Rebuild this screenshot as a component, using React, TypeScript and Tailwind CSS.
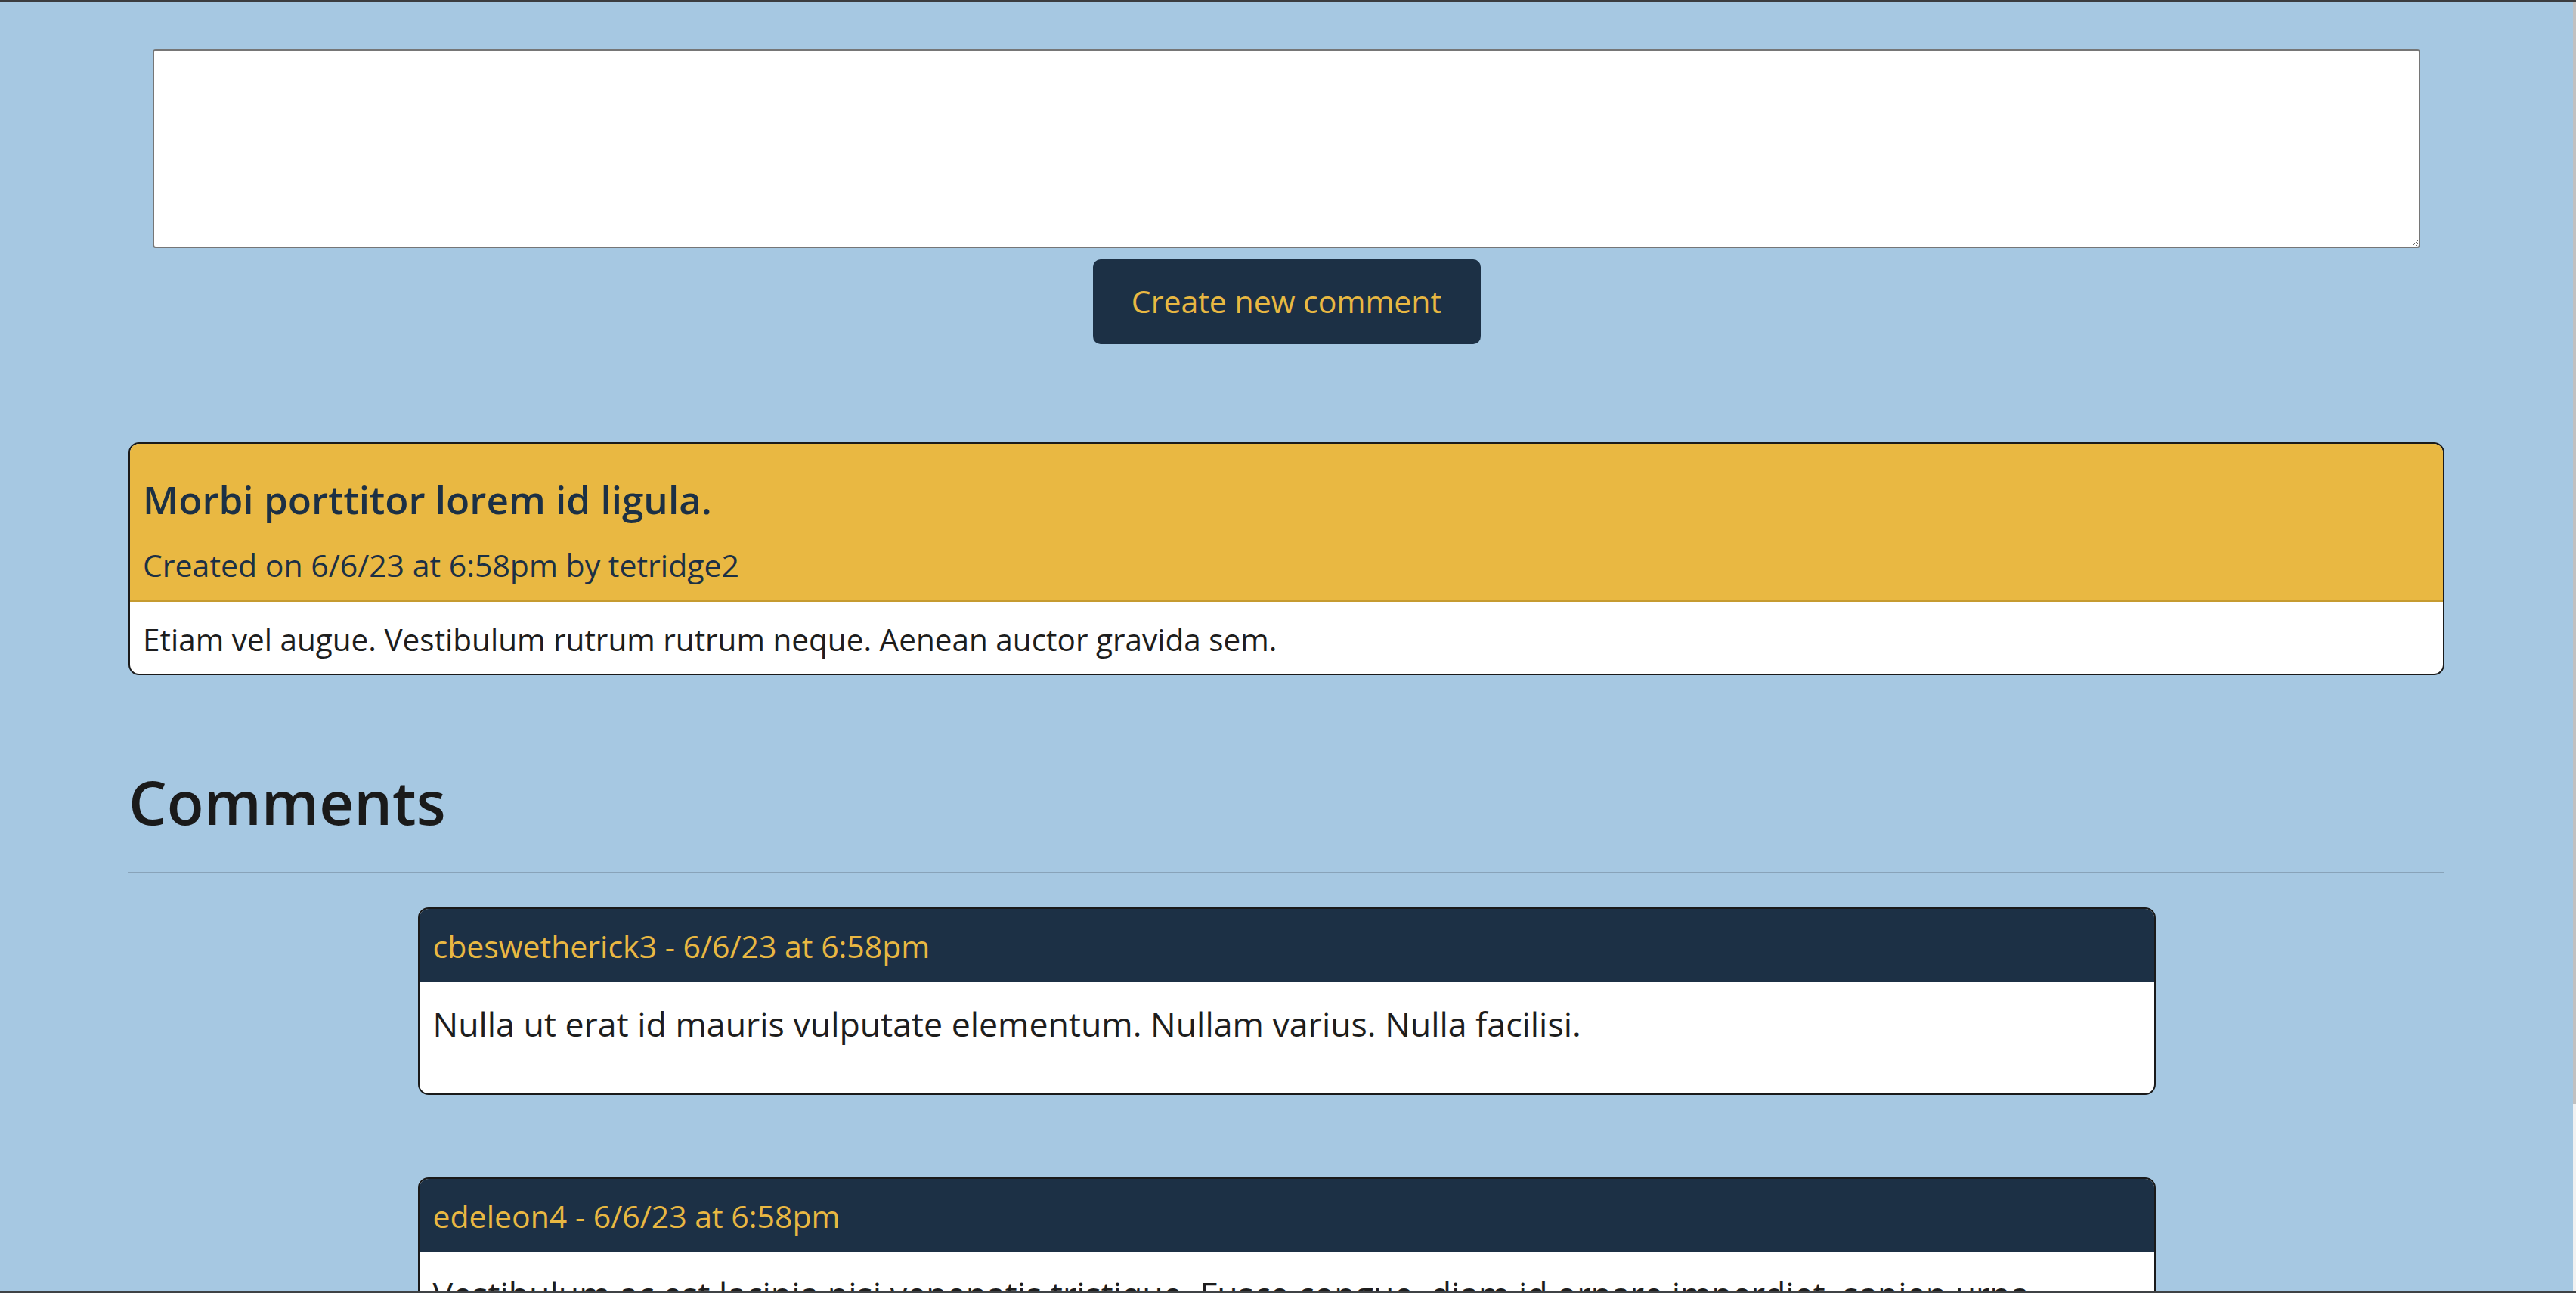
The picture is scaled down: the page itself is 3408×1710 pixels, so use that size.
const comments = [
  {
    user: "cbeswetherick3",
    date: "6/6/23 at 6:58pm",
    body: "Nulla ut erat id mauris vulputate elementum. Nullam varius. Nulla facilisi.",
  },
  {
    user: "edeleon4",
    date: "6/6/23 at 6:58pm",
    body: "Vestibulum ac est lacinia nisi venenatis tristique. Fusce congue, diam id ornare imperdiet, sapien urna pretium nisl, ut volutpat sapien arcu sed augue. Aliquam erat volutpat.",
  },
];

export default function App() {
  return (
    <div className="flex h-[1710px] w-full flex-col overflow-hidden bg-[#a6c8e2] font-['Open_Sans',sans-serif]">
      <div className="h-[2px] shrink-0 bg-[#3b3d40]" />

      <div className="flex min-h-0 flex-1">
        <main className="min-w-0 flex-1 overflow-hidden">
          <div className="mx-auto w-[3064px]">
            {/* New comment form */}
            <div className="flex flex-col items-center px-[32px] pt-[63px]">
              <textarea className="block h-[263px] w-full resize-y rounded-[4px] border-2 border-[#767676] bg-white" />
              <button className="mt-[15px] h-[112px] w-[513px] rounded-[10px] bg-[#1c3045] text-[41px] text-[#e9b842]">
                Create new comment
              </button>
            </div>

            {/* Post */}
            <div className="mt-[130px] overflow-hidden rounded-[14px] border-2 border-[#1a1a1a] bg-white">
              <div className="border-b-2 border-[#c69b30] bg-[#e9b842] px-[17px] pt-[42px] pb-[22px] text-[#1c3045]">
                <h4 className="text-[51.2px] leading-[62px] font-semibold">Morbi porttitor lorem id ligula.</h4>
                <h5 className="mt-[32px] text-[41px] leading-[49px]">Created on 6/6/23 at 6:58pm by tetridge2</h5>
              </div>
              <p className="px-[17px] pt-[20px] pb-[16px] text-[40.5px] leading-[59px] text-[#1d1d1d]">
                Etiam vel augue. Vestibulum rutrum rutrum neque. Aenean auctor gravida sem.
              </p>
            </div>

            <h2 className="mt-[118px] text-[80px] leading-[98px] font-semibold text-[#1a1a1a]">Comments</h2>
            <hr className="mt-[44px] h-[2px] border-0 bg-[#88a3b9]" />

            {/* Comment list */}
            <div className="mx-auto mt-[45px] flex w-[2299px] flex-col gap-[109px]">
              {comments.map((c) => (
                <div key={c.user} className="overflow-hidden rounded-[14px] border-2 border-[#1a1a1a] bg-white">
                  <div className="bg-[#1c3045] px-[18px] pt-[25px] pb-[23px] text-[41px] leading-[49px] text-[#e9b842]">
                    {c.user} - {c.date}
                  </div>
                  <p className="px-[18px] pt-[21px] pb-[58px] text-[44.7px] leading-[68px] text-[#1d1d1d]">{c.body}</p>
                </div>
              ))}
            </div>
          </div>
        </main>

        {/* scrollbar */}
        <div className="flex w-[4px] shrink-0 flex-col bg-[#f1f1f1]">
          <div className="h-[1458px] bg-[#c1c1c1]" />
        </div>
      </div>

      <div className="h-[3px] shrink-0 bg-[#3f4245]" />
    </div>
  );
}
